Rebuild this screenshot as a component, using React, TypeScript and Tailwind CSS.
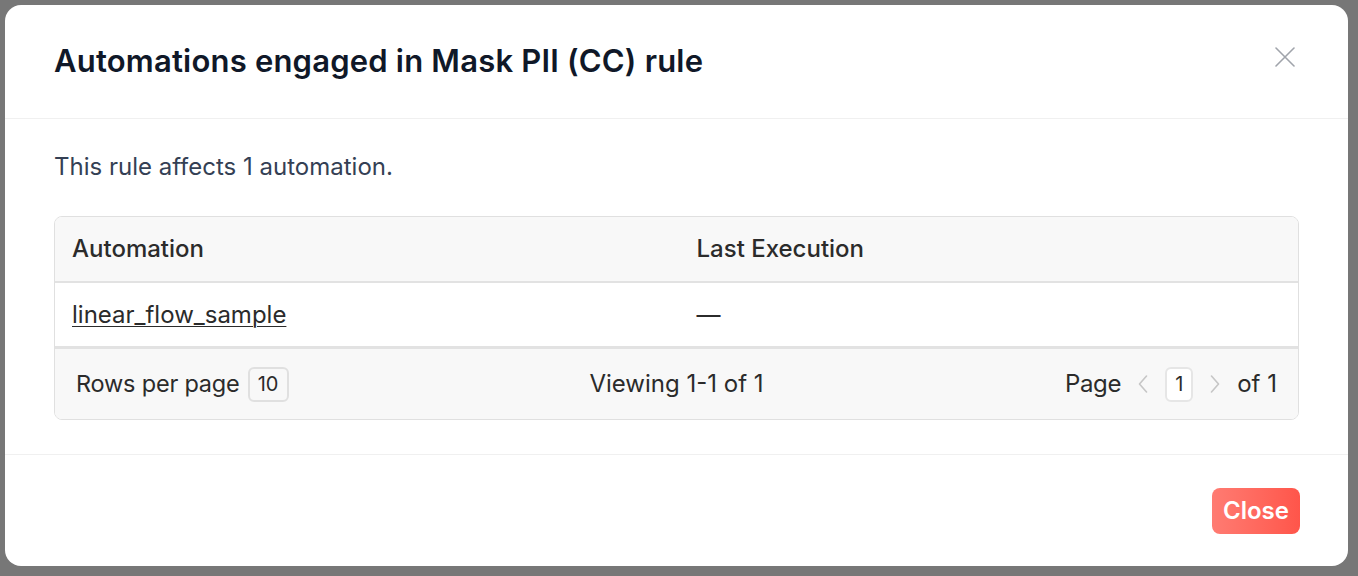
function CloseIcon() {
  return (
    <svg width="20" height="20" viewBox="0 0 20 20" fill="none" stroke="#a0a4ab" strokeWidth="1.6" strokeLinecap="round">
      <path d="M1 1 19 19M19 1 1 19" />
    </svg>
  );
}

function Chevron({ dir }: { dir: 'left' | 'right' }) {
  return (
    <svg width="10" height="18" viewBox="0 0 10 18" fill="none" stroke="#c6c6c6" strokeWidth="1.6" strokeLinecap="round" strokeLinejoin="round">
      {dir === 'left' ? <path d="M8.5 1 1.5 9l7 8" /> : <path d="M1.5 1l7 8-7 8" />}
    </svg>
  );
}

export default function App() {
  return (
    <div
      className="h-[576px] w-[1358px] overflow-hidden bg-[#777777] pt-[5px] pl-[5px]"
      style={{ fontFamily: 'Inter, "Noto Sans", sans-serif' }}
    >
      {/* modal */}
      <div className="flex h-[561px] w-[1343px] flex-col rounded-[16px] bg-white">
        {/* header */}
        <div className="flex h-[114px] items-center justify-between border-b border-[#f0f0f0] pl-[49px] pr-[53px]">
          <h2 className="text-[31px] font-semibold tracking-[0.2px] text-[#101828]">
            Automations engaged in Mask PII (CC) rule
          </h2>
          <div className="mb-[10px]">
            <CloseIcon />
          </div>
        </div>

        {/* body */}
        <div className="border-b border-[#f0f0f0] px-[49px] pt-[33px] pb-[34px]">
          <p className="mb-[34px] text-[24px] leading-[30px] text-[#344054]">This rule affects 1 automation.</p>

          <div className="overflow-hidden rounded-[8px] border border-[#e0e0e0] text-[24px] text-[#2b2b2b]">
            <div className="grid h-[66px] grid-cols-2 items-center border-b-2 border-[#e2e2e2] bg-[#f8f8f8] font-medium">
              <div className="pl-[17px]">Automation</div>
              <div className="pl-[20px]">Last Execution</div>
            </div>
            <div className="grid h-[66px] grid-cols-2 items-center border-b-[3px] border-[#e2e2e2] bg-white">
              <div className="pl-[17px]">
                <a className="underline decoration-1 underline-offset-[3px]">linear_flow_sample</a>
              </div>
              <div className="pl-[20px]">—</div>
            </div>
            <div className="grid h-[70px] grid-cols-3 items-center bg-[#f8f8f8] pr-[21px] pl-[21px]">
              <div className="flex items-center gap-[8px]">
                <span className="text-[23.5px] tracking-[-0.2px]">Rows per page</span>
                <span className="flex h-[35px] w-[41px] items-center justify-center rounded-[6px] border-2 border-[#e0e0e0] text-[20px]">
                  10
                </span>
              </div>
              <div className="text-center">Viewing 1-1 of 1</div>
              <div className="flex items-center justify-end gap-[17px]">
                <span className="tracking-[-0.3px]">Page</span>
                <Chevron dir="left" />
                <span className="flex h-[35px] w-[28px] items-center justify-center rounded-[6px] border-2 border-[#e6e6e6] bg-white text-[20px]">
                  1
                </span>
                <Chevron dir="right" />
                <span>of 1</span>
              </div>
            </div>
          </div>
        </div>

        {/* footer */}
        <div className="flex flex-1 items-center justify-end pr-[48px]">
          <button className="h-[46px] w-[88px] rounded-[8px] bg-gradient-to-r from-[#ff7b72] to-[#ff554a] text-[24px] font-semibold text-white">
            Close
          </button>
        </div>
      </div>
    </div>
  );
}
